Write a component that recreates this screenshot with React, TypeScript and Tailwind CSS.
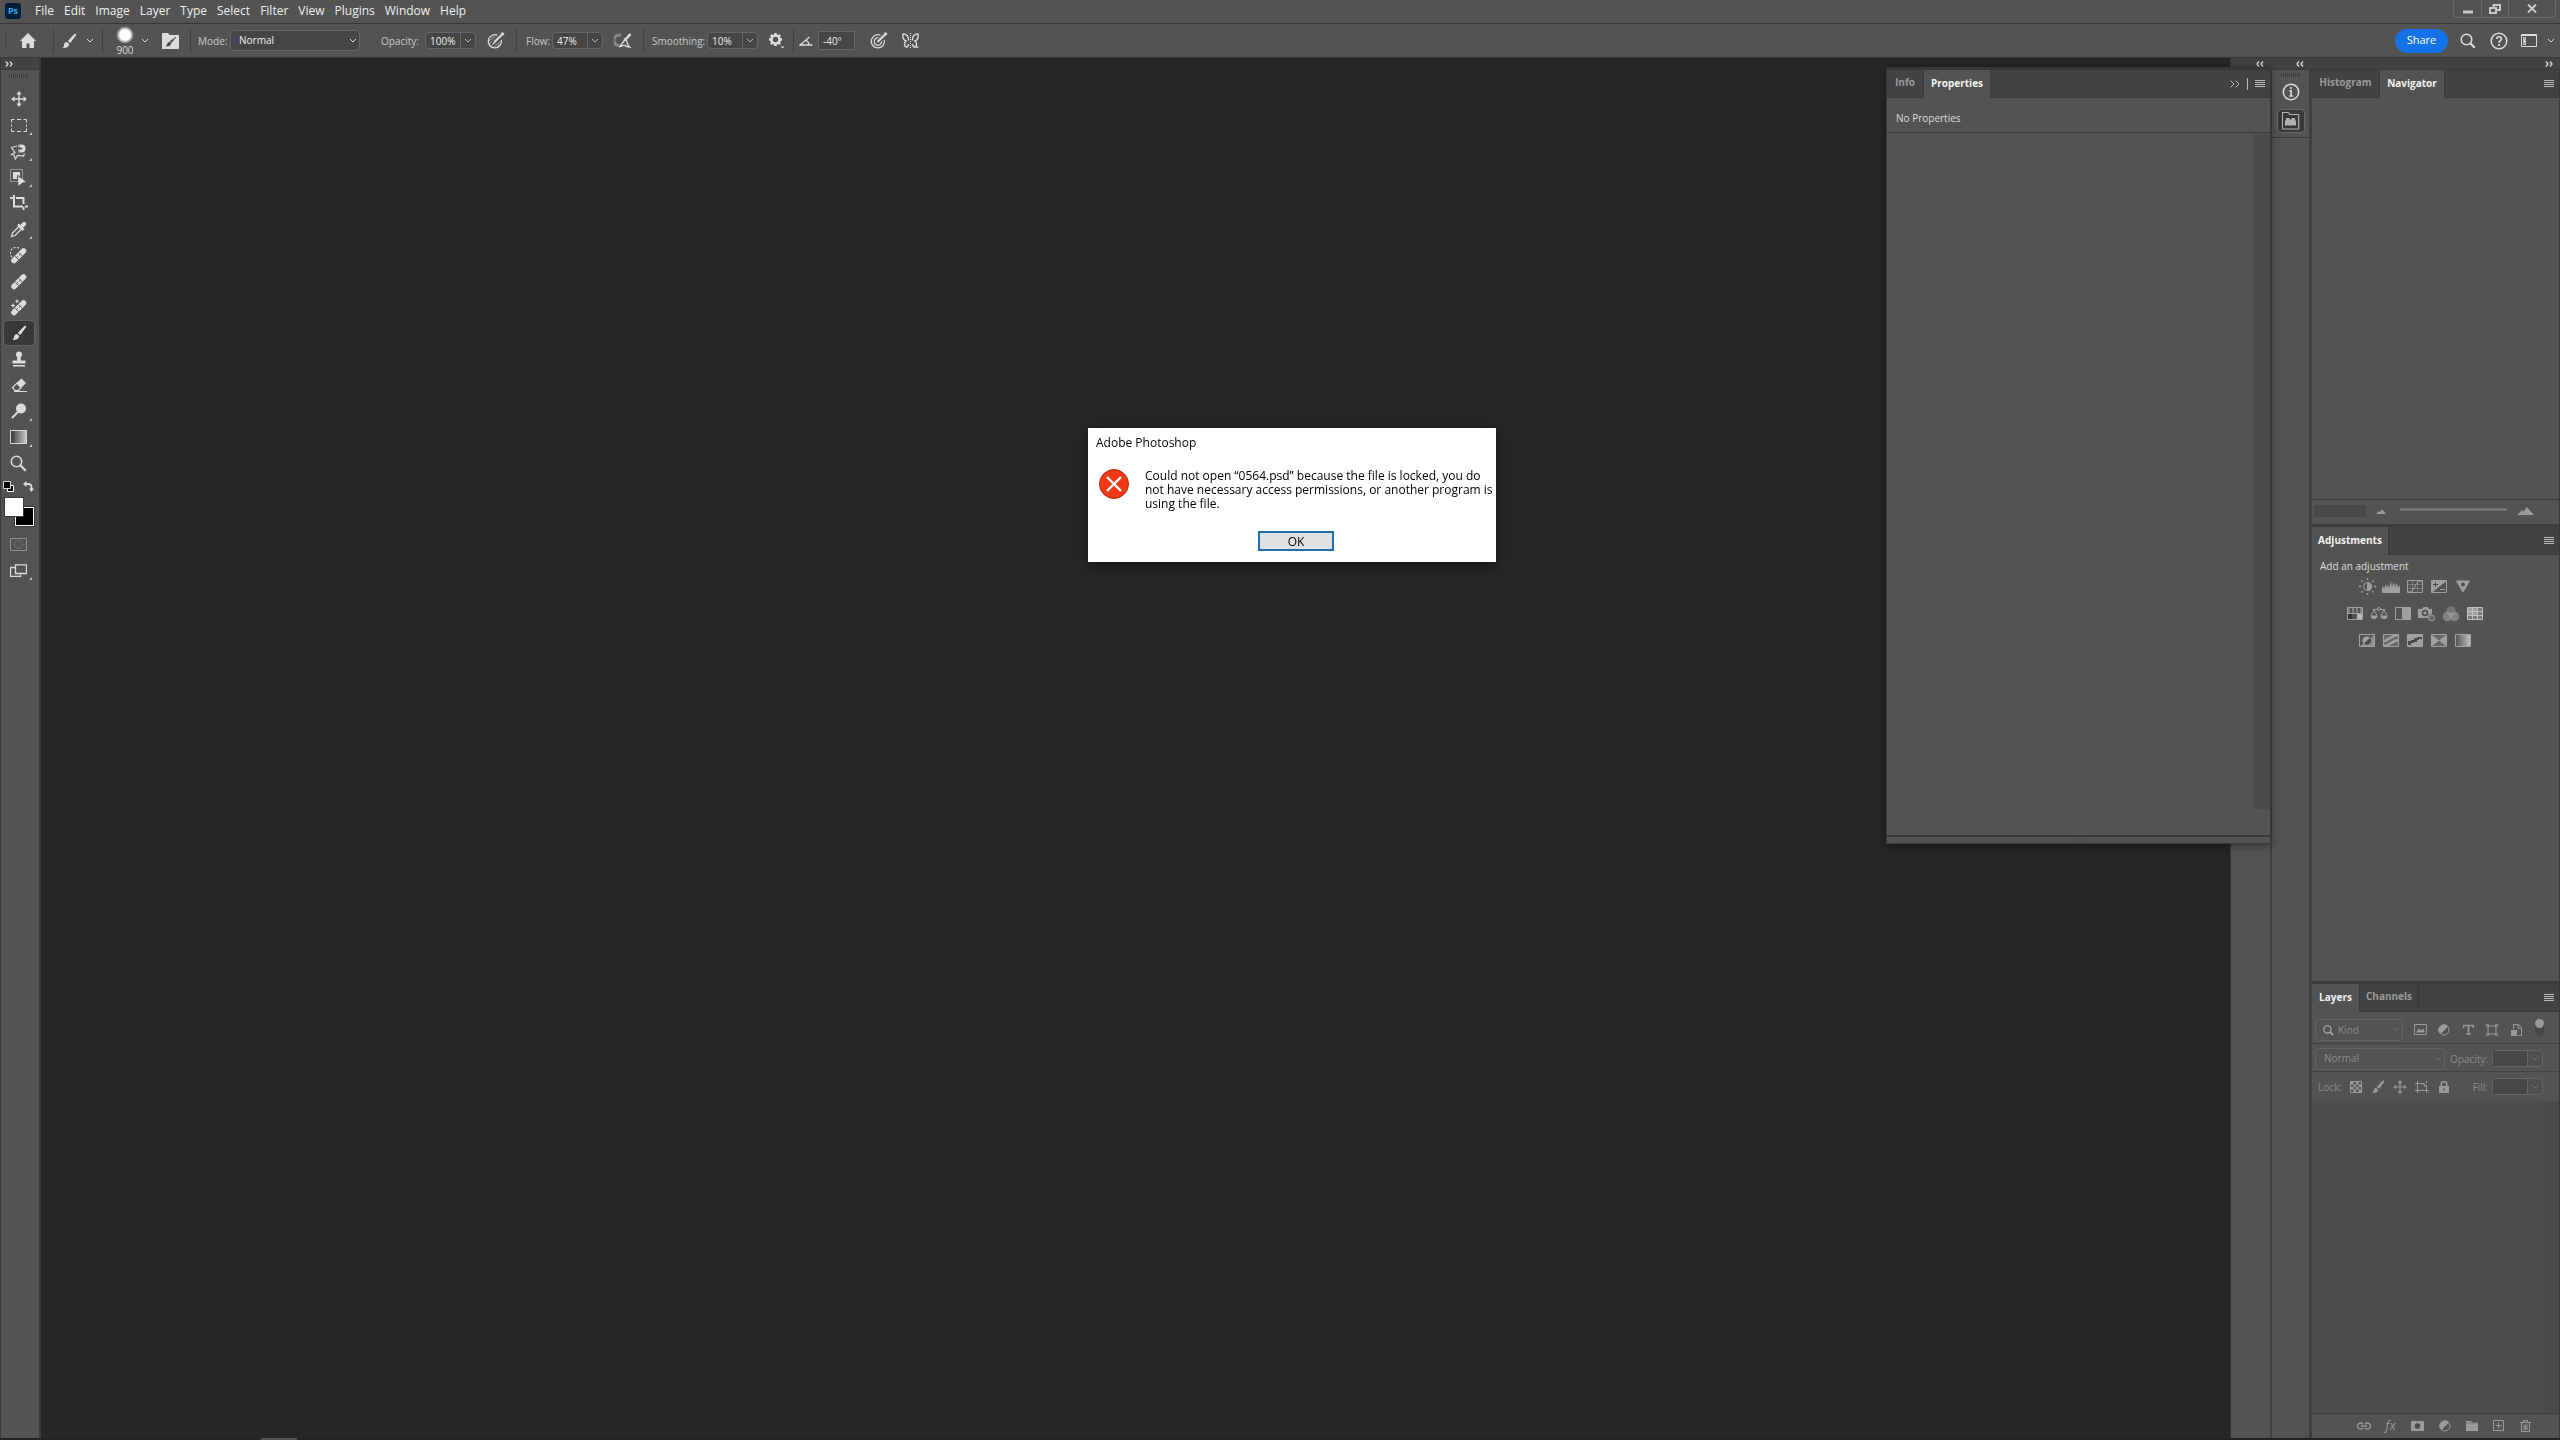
import React from "react";

type IconProps = { className?: string };

function Svg({ w, h, children, className = "" }: { w: number; h: number; children: React.ReactNode; className?: string }) {
  return (
    <svg width={w} height={h} viewBox={`0 0 ${w} ${h}`} fill="none" stroke="currentColor" className={`shrink-0 ${className}`} aria-hidden="true">
      {children}
    </svg>
  );
}

const Chevron = ({ className = "" }: IconProps) => (
  <Svg w={8} h={6} className={className}><path d="M1 1l3 3 3-3" /></Svg>
);

const MenuLines = () => (
  <Svg w={10} h={8}><path d="M0 .5h10M0 2.5h10M0 4.5h10M0 6.5h10" /></Svg>
);

const DoubleChevron = ({ left = false }: { left?: boolean }) => (
  <Svg w={8} h={6} className={left ? "rotate-180" : ""}><path d="M1 .5L3 3 1 5.500M5 .5L7 3 5 5.500" strokeWidth="1.300" /></Svg>
);

const Brush = ({ className = "" }: IconProps) => (
  <Svg w={16} h={16} className={className}>
    <g fill="currentColor" stroke="none">
      <path d="M14.800.8c.7.5.5 1.200.1 1.800L9.300 10 6.800 7.900l6.300-6.700c.6-.6 1.200-.7 1.700-.4z" />
      <path d="M5.800 8.900l2.500 2.200c-.2 2.500-2.800 4.100-7 4 1.800-1 1.500-2.300 1.900-4 .4-1.400 1.500-2.100 2.600-2.200z" />
    </g>
  </Svg>
);

const Home = () => (
  <Svg w={16} h={15}><path d="M8 0L0 8h2v7h4.500v-4.500h3V15H14V8h2z" fill="currentColor" stroke="none" /></Svg>
);

const BrushSettings = () => (
  <Svg w={18} h={18}>
    <path d="M0 1h6l1.500 2H17v14H0z" fill="currentColor" stroke="none" />
    <path d="M14 5l-4.500 5.500L8 9.300zM7.400 10l1.700 1.400c-.5 2-2 2.800-5 2.700 1.500-1 .8-3 3.300-4.100z" fill="#484848" stroke="#484848" strokeWidth=".6" />
  </Svg>
);

const PressureOpacity = () => (
  <Svg w={18} h={18}>
    <path d="M10.500 3.300A6.600 6.600 0 1 0 14.300 8" strokeWidth="1.300" />
    <path d="M2 9l6-5M2 12l6.500-6M3.500 14.500l4-3.500M6 16l7-6M9 16l5-4" opacity=".6" />
    <path d="M6 11.500L15.800 1.700" stroke="#535353" strokeWidth="5" />
    <path d="M7.500 10l7-7" strokeWidth="2.200" />
    <path d="M14.500 3l2-2" strokeWidth="3" />
    <path d="M5.500 12.200l3-.9-2-1.900z" fill="currentColor" stroke="none" />
  </Svg>
);

const Airbrush = () => (
  <Svg w={18} h={16}>
    <path d="M7 2.500A5.200 5.200 0 1 0 5.500 12.500" strokeWidth="3" opacity=".4" />
    <path d="M10 5.500l3 3M11 6.500L6 13.500c3 .3 3.500-2.500 5-1s2.500 1 4.500 1.500c-2-2-2.500-3-2.500-5.500" strokeWidth="1.300" />
    <path d="M11.500 6.500l5-5.500" strokeWidth="2.600" />
  </Svg>
);

const Gear = () => (
  <Svg w={17} h={17}>
    <circle cx="7.500" cy="7.500" r="4" strokeWidth="2.600" />
    <path d="M7.500 1v2M7.500 12v2M1 7.500h2M12 7.500h2M2.900 2.900l1.400 1.400M10.700 10.700l1.400 1.400M12.100 2.900l-1.400 1.400M4.300 10.700l-1.400 1.400" strokeWidth="2.600" />
    <path d="M12.500 14.500h4l-2 2z" fill="currentColor" stroke="none" />
  </Svg>
);

const Angle = () => (
  <Svg w={14} h={10}><path d="M10.500 1L1 9h12.500M7 4.500c2 .8 3 2.300 3 4.500" strokeWidth="1.300" /></Svg>
);

const PressureSize = () => (
  <Svg w={18} h={18}>
    <path d="M10.500 3.300A6.600 6.600 0 1 0 14.300 8" strokeWidth="1.300" />
    <path d="M9 6a3.700 3.700 0 1 0 2.600 3.300" strokeWidth="1.300" />
    <path d="M7 10.500l8-8" stroke="#535353" strokeWidth="4" />
    <path d="M7.500 10l7-7" strokeWidth="2.200" />
    <path d="M14.500 3l2-2" strokeWidth="3" />
  </Svg>
);

const Butterfly = () => (
  <Svg w={18} h={18}>
    <path d="M6.500 8.500C7 4.500 4 1.500 1 2c-.5 3 .5 6 3 7-2 1.500-2 5 0 6 1.500 0 2.500-1.500 2.500-3M10.500 8.500C10 4.500 13 1.500 16 2c.5 3-.5 6-3 7 2 1.500 2 5 0 6-1.500 0-2.500-1.500-2.500-3" strokeWidth="1.400" />
    <path d="M8.500 1v16" strokeDasharray="1 1" />
    <path d="M13 14.500h4l-2 2z" fill="currentColor" stroke="none" />
  </Svg>
);

const Search = () => (
  <Svg w={16} h={16}><circle cx="6.500" cy="6.500" r="5.300" strokeWidth="1.500" /><path d="M10.300 10.300l4.500 4.500" strokeWidth="2" /></Svg>
);

const Help = () => (
  <Svg w={18} h={18}>
    <circle cx="9" cy="9" r="7.800" strokeWidth="1.500" />
    <path d="M6.800 7c0-3 4.600-3 4.600 0 0 1.700-2.300 1.600-2.300 3.700M9.100 12v2" strokeWidth="1.700" />
  </Svg>
);

const Workspace = () => (
  <Svg w={16} h={13}><path d="M.5.5h15v12H.5zM.5 1.500h15" /><path d="M2.500 3.500h2v2h-2zM2.500 6.500h2v1h-2zM2.500 8.500h2v2h-2z" /></Svg>
);

const InfoIcon = () => (
  <Svg w={18} h={18}><circle cx="9" cy="9" r="7.700" strokeWidth="1.500" /><path d="M9 4v2M7.500 7.700h1.600V13M7.300 13h3.500" strokeWidth="1.600" /></Svg>
);

const Libraries = () => (
  <Svg w={18} h={18}>
    <path d="M.5 17V.5h6l1.200 2h9V17z" strokeWidth="1.100" />
    <path d="M3 13.500v-5h1V6h3.500v1.500h2V6H13v2.500h1v5z" fill="currentColor" stroke="none" />
  </Svg>
);

/* ---- Tool icons ---- */

const Move = () => (
  <Svg w={16} h={16}>
    <path d="M8 2v12M2 8h12" strokeWidth="1.400" />
    <path d="M8 0l2.700 3.500H5.300zM8 16l2.700-3.500H5.300zM0 8l3.500-2.700v5.400zM16 8l-3.500-2.700v5.400z" fill="currentColor" stroke="none" />
  </Svg>
);
const Marquee = () => (
  <Svg w={16} h={13}><path d="M.500 3.500v-3h3M6 .5h4M12.500.500h3v3M15.500 5.500v2M15.500 9.500v3h-3M10 12.500H6M3.500 12.500h-3v-3M.500 7.500v-2" /></Svg>
);
const Lasso = () => (
  <Svg w={17} h={17}>
    <path d="M7 3L1.500 4.500 5 9.500l-3.500 2L4 12l1.500 4 2-3.500 6 .5 1-2.500" strokeWidth="1.200" />
    <path d="M8 3h3.500a2.500 2.500 0 0 1 0 5H8" strokeWidth="3" />
    <path d="M9 1v4M9 6.500v3" stroke="#535353" strokeWidth=".8" />
  </Svg>
);
const ObjectSelect = () => (
  <Svg w={17} h={17}>
    <path d="M.5.5h12v12H.5z" strokeDasharray="1 1" />
    <path d="M3 3h7v4L7 6v4H3z" fill="currentColor" stroke="none" />
    <path d="M8 7l8 6-3.500.5L8.500 17z" fill="currentColor" stroke="none" />
  </Svg>
);
const Crop = () => (
  <Svg w={18} h={18}><path d="M0 4h3M4 1v11.500h9M6 4h7.500v6M13.500 13v3M15 12.500h3" strokeWidth="2" /></Svg>
);
const Eyedropper = () => (
  <Svg w={17} h={17}>
    <path d="M1.500 15.500l1-3.500L9 5.500 11.500 8 5 14.500z" strokeWidth="1.300" />
    <path d="M8 3.500L13.500 9M10.500 6.500L13.800 3" strokeWidth="2.500" />
    <path d="M12.500 4.500l1.700-1.700" strokeWidth="4" strokeLinecap="round" />
  </Svg>
);
const Bandage = () => (
  <>
    <path d="M4 13.500L13.500 4" strokeWidth="5.500" strokeLinecap="round" />
    <path d="M5.300 9.300l3.400 3.400M8.800 5.500l3.400 3.400" stroke="#535353" />
    <path d="M7.500 9.500h.1M9.500 8h.1" stroke="#535353" strokeLinecap="round" />
  </>
);
const SpotHeal = () => (
  <Svg w={17} h={17}><path d="M2 10A5.500 5.500 0 0 1 10 2" strokeDasharray="2 1.500" strokeWidth="1.200" /><Bandage /></Svg>
);
const Heal = () => <Svg w={17} h={17}><Bandage /></Svg>;
const Remove = () => (
  <Svg w={17} h={17}>
    <path d="M3 4l.8 1.700L5.500 6.500l-1.700.8L3 9l-.8-1.700L.5 6.500l1.700-.8zM7 0l.7 1.500L9.200 2.200l-1.500.7L7 4.400l-.7-1.500L4.800 2.200l1.500-.7z" fill="currentColor" stroke="none" />
    <Bandage />
  </Svg>
);
const Stamp = () => (
  <Svg w={14} h={16}>
    <g fill="currentColor" stroke="none">
      <circle cx="7" cy="3.500" r="3" />
      <path d="M5.500 5h3l.5 4.500h4.500v3H.5v-3H5zM1 14h12v1.500H1z" />
    </g>
  </Svg>
);
const Eraser = () => (
  <Svg w={16} h={14}>
    <path d="M6 5l4.500-4 4 4L10 9.500z" fill="currentColor" />
    <path d="M6 5l4 4.500-2.500 3H4L1.500 9.500zM3 13.500h13" strokeWidth="1.200" />
  </Svg>
);
const Dodge = () => (
  <Svg w={16} h={16}><circle cx="10" cy="5.500" r="5" fill="currentColor" stroke="none" /><path d="M7 9l-6 6" strokeWidth="2" /></Svg>
);
const GradientTool = () => (
  <Svg w={17} h={14}>
    <defs><linearGradient id="tool-gradient"><stop offset="0" stopColor="#333" /><stop offset="1" stopColor="#ccc" /></linearGradient></defs>
    <path d="M.5.5h16v13H.5z" fill="url(#tool-gradient)" />
  </Svg>
);
const ZoomTool = () => (
  <Svg w={17} h={17}><circle cx="6.500" cy="6.500" r="5.200" strokeWidth="1.500" /><path d="M10.200 10.200l5.500 5.500" strokeWidth="2.200" /></Svg>
);
const QuickMask = () => (
  <Svg w={17} h={13}><path d="M.5.5h16v12H.5z" /><circle cx="8.500" cy="6.500" r="4" strokeDasharray="1.200 1.200" /></Svg>
);
const ScreenMode = () => (
  <Svg w={17} h={13}><path d="M5.500 3.500h-5v9h10v-2" strokeWidth="1.300" /><path d="M5.500.8h11v8.700h-11z" strokeWidth="1.300" /></Svg>
);

/* ---- Small pieces ---- */

const Grip = ({ className = "" }: IconProps) => (
  <Svg w={20} h={4} className={`text-[#3d3d3d] ${className}`}><path d="M0 2h20" strokeWidth="4" strokeDasharray="1 1" /></Svg>
);

const Sep = () => <span className="h-6 w-px shrink-0 bg-[#404040]" />;

function NumberField({ id, label, value, disabled = false }: { id: string; label: string; value: string; disabled?: boolean }) {
  return (
    <>
      <label htmlFor={id} className={`flex-1 text-[10px] leading-4 ${disabled ? "text-right text-[#8c8c8c]" : "text-[#c8c8c8]"}`}>{label}</label>
      <span className={`flex h-[17px] w-[51px] shrink-0 rounded-sm border border-[#666] ${disabled ? "bg-[#4f4f4f]" : "bg-[#454545]"}`}>
        <input id={id} defaultValue={value} disabled={disabled} className={`w-[35px] border-r border-[#666] pl-1 text-[10px] leading-4 text-[#f0f0f0] outline-none ${disabled ? "bg-[#464646]" : "bg-transparent"}`} />
        <button aria-label={`${label} slider`} disabled={disabled} className="flex flex-1 items-center justify-center text-[#b8b8b8] disabled:text-[#707070]"><Chevron /></button>
      </span>
    </>
  );
}

function PanelMenu() {
  return <button aria-label="Panel menu" className="ml-auto mr-[5px] flex items-center text-[#b8b8b8]"><MenuLines /></button>;
}

function Tab({ name, active = false, className = "" }: { name: string; active?: boolean; className?: string }) {
  return (
    <button role="tab" aria-selected={active} className={`border-r border-[#383838] pb-0.5 text-[10px] font-bold ${active ? "bg-[#535353] text-[#f2f2f2]" : "border-b text-[#9a9a9a]"} ${className}`}>
      {name}
    </button>
  );
}

function TabBar({ children }: { children: React.ReactNode }) {
  return (
    <div role="tablist" className="flex h-7 shrink-0 bg-[#424242] shadow-[inset_0_-1px_0_#383838]">
      {children}
    </div>
  );
}

/* ---- Bars ---- */

const MENUS = ["File", "Edit", "Image", "Layer", "Type", "Select", "Filter", "View", "Plugins", "Window", "Help"];

function MenuBar() {
  return (
    <header className="flex h-6 shrink-0 border-b border-[#383838]">
      <div className="ml-[5px] mt-[3px] flex size-4 items-center justify-center rounded-[3px] bg-[#001e36] text-[9px] font-bold text-[#31a8ff]">Ps</div>
      <nav className="ml-[14px] flex h-[22px] gap-[10px] text-xs leading-5 text-[#f0f0f0]">
        {MENUS.map((m) => <button key={m}>{m}</button>)}
      </nav>
      <div className="ml-auto mr-1 flex h-[18px] rounded-b border border-t-0 border-[#6a6a6a] text-[#c8c8c8]">
        <button aria-label="Minimize" className="flex w-7 items-center justify-center border-r border-[#6a6a6a]">
          <Svg w={10} h={10}><path d="M0 8h10" strokeWidth="3" /></Svg>
        </button>
        <button aria-label="Restore" className="flex w-[27px] items-center justify-center border-r border-[#6a6a6a]">
          <Svg w={12} h={10}><path d="M1 4h6v5H1zM4.500 4V1H11v5H7.500" strokeWidth="2" /></Svg>
        </button>
        <button aria-label="Close" className="flex w-[46px] items-center justify-center">
          <Svg w={10} h={9}><path d="M1 .5l8 8M9 .5l-8 8" strokeWidth="2" /></Svg>
        </button>
      </div>
    </header>
  );
}

function OptionsBar() {
  return (
    <div className="flex h-[34px] shrink-0 items-center border-b border-[#383838] text-[#dcdcdc]">
      <Svg w={2} h={20} className="ml-[5px] text-[#404040]"><path d="M1 0v20" strokeWidth="2" strokeDasharray="1 1" /></Svg>
      <button aria-label="Home" className="flex w-[46px] justify-center pr-1"><Home /></button>
      <Sep />
      <button aria-label="Brush tool" className="flex w-12 items-center justify-between pl-[7px] pr-2"><Brush /><Chevron /></button>
      <Sep />
      <button aria-label="Brush preset picker" className="flex w-[59px] items-center justify-between pl-[13px] pr-[13px]">
        <span className="flex flex-col items-center">
          <span className="size-[18px] rounded-full bg-[radial-gradient(circle,#fff_40%,#535353_70%)]" />
          <span className="text-[10px] leading-3">900</span>
        </span>
        <Chevron />
      </button>
      <button aria-label="Brush settings" className="flex w-[28px] justify-start"><BrushSettings /></button>
      <Sep />
      <label htmlFor="mode" className="ml-[7px] w-8 text-[10px] leading-4 text-[#c8c8c8]">Mode:</label>
      <span className="relative">
        <select id="mode" className="block h-[21px] w-[130px] appearance-none rounded-sm border border-[#666] bg-[#454545] pl-2 text-[10px] text-[#f0f0f0] outline-none">
          <option>Normal</option>
        </select>
        <Chevron className="pointer-events-none absolute right-[3px] top-2" />
      </span>
      <div className="ml-[9px]"><Sep /></div>
      <div className="ml-3 flex w-[95px] items-center"><NumberField id="opacity" label="Opacity:" value="100%" /></div>
      <button aria-label="Pressure controls opacity" className="flex w-10 justify-center"><PressureOpacity /></button>
      <Sep />
      <div className="ml-[9px] flex w-[77px] items-center"><NumberField id="flow" label="Flow:" value="47%" /></div>
      <button aria-label="Airbrush" className="flex w-10 justify-center"><Airbrush /></button>
      <Sep />
      <div className="ml-2 flex w-[106px] items-center"><NumberField id="smoothing" label="Smoothing:" value="10%" /></div>
      <button aria-label="Smoothing options" className="flex w-[35px] justify-end pr-2"><Gear /></button>
      <Sep />
      <label htmlFor="angle" aria-label="Brush angle" className="flex w-6 justify-center"><Angle /></label>
      <input id="angle" defaultValue="-40º" className="h-[19px] w-[37px] border border-[#666] bg-[#454545] pl-1 text-[10px] text-[#f0f0f0] outline-none" />
      <div className="ml-1"><Sep /></div>
      <button aria-label="Pressure controls size" className="ml-[11px]"><PressureSize /></button>
      <button aria-label="Symmetry" className="ml-[14px]"><Butterfly /></button>

      <button className="ml-auto h-6 w-[53px] rounded-full bg-[#1473e6] text-[11px] text-white">Share</button>
      <button aria-label="Search" className="ml-3"><Search /></button>
      <button aria-label="Help" className="ml-[14px]"><Help /></button>
      <button aria-label="Workspace" className="ml-[13px] mr-[5px] flex items-center gap-[10px]"><Workspace /><Chevron /></button>
    </div>
  );
}

const TOOLS: { name: string; icon: React.ReactNode; more?: boolean; active?: boolean }[] = [
  { name: "Move", icon: <Move /> },
  { name: "Rectangular marquee", icon: <Marquee />, more: true },
  { name: "Magnetic lasso", icon: <Lasso />, more: true },
  { name: "Object selection", icon: <ObjectSelect />, more: true },
  { name: "Crop", icon: <Crop /> },
  { name: "Eyedropper", icon: <Eyedropper />, more: true },
  { name: "Spot healing brush", icon: <SpotHeal /> },
  { name: "Healing brush", icon: <Heal /> },
  { name: "Remove", icon: <Remove /> },
  { name: "Brush", icon: <Brush />, active: true },
  { name: "Clone stamp", icon: <Stamp /> },
  { name: "Eraser", icon: <Eraser /> },
  { name: "Dodge", icon: <Dodge />, more: true },
  { name: "Gradient", icon: <GradientTool />, more: true },
  { name: "Zoom", icon: <ZoomTool /> },
];

function ToolButton({ name, icon, more, active }: { name: string; icon: React.ReactNode; more?: boolean; active?: boolean }) {
  return (
    <button aria-label={name} className={`relative flex h-[26px] w-8 items-center justify-center rounded pr-px ${active ? "border border-[#636363] bg-[#383838]" : ""}`}>
      {icon}
      {more && <span className="absolute bottom-[3px] right-[3px] border-b-[3px] border-l-[3px] border-b-[#c0c0c0] border-l-transparent" />}
    </button>
  );
}

function Toolbar() {
  return (
    <aside className="flex w-[41px] shrink-0 flex-col border-l border-r-2 border-[#3a3a3a] text-[#dcdcdc]">
      <div className="flex h-3 shrink-0 items-center border-b border-[#383838] bg-[#424242] pl-1"><DoubleChevron /></div>
      <div className="flex flex-col items-center pr-[2px] pt-1">
        <Grip className="mb-2" />
        {TOOLS.map((t) => <ToolButton key={t.name} {...t} />)}
        <div className="relative h-[55px] w-8">
          <button aria-label="Default colors" className="absolute left-0 top-[5px]">
            <Svg w={11} h={11}><path d="M4.500 4.500h6v6h-6z" fill="#000" stroke="#fff" /><path d="M.5.5h7v7h-7z" fill="#000" /></Svg>
          </button>
          <button aria-label="Swap colors" className="absolute right-[1px] top-[5px]">
            <Svg w={11} h={11}><path d="M3 3h2c2.500 0 3.500 1 3.500 3.500V8" strokeWidth="1.800" /><path d="M0 3l3.500-3v6zM8.500 11l2.500-3.500H6z" fill="currentColor" stroke="none" /></Svg>
          </button>
          <button aria-label="Background color" className="absolute left-3 top-[31px] size-[19px] border border-white bg-black outline outline-1 outline-[#383838]" />
          <button aria-label="Foreground color" className="absolute left-px top-[21px] size-5 border border-[#383838] bg-white" />
        </div>
        <ToolButton name="Quick mask" icon={<span className="text-[#909090]"><QuickMask /></span>} />
        <ToolButton name="Screen mode" icon={<ScreenMode />} more />
      </div>
    </aside>
  );
}

/* ---- Floating properties panel ---- */

function PropertiesPanel() {
  return (
    <section className="absolute right-[41px] top-[9px] flex h-[777px] w-[385px] flex-col border-x border-b border-t-[3px] border-[#383838] bg-[#535353] shadow-[0_2px_8px_rgba(0,0,0,0.4)]">
      <TabBar>
        <Tab name="Info" className="w-[37px]" />
        <Tab name="Properties" active className="w-[67px]" />
        <div className="ml-auto mr-[5px] flex items-center gap-[7px] text-[#b8b8b8]">
          <button aria-label="Collapse panel"><Svg w={10} h={8}><path d="M.5.5L4 4 .5 7.500M5.500.5L9 4 5.500 7.500" /></Svg></button>
          <span className="h-3 w-px bg-[#b8b8b8]" />
          <button aria-label="Panel menu"><MenuLines /></button>
        </div>
      </TabBar>
      <p className="h-[35px] shrink-0 border-b border-[#383838] pl-[9px] pt-3 text-[10px] leading-4 text-[#dcdcdc]">No Properties</p>
      <div className="flex flex-1 justify-end pb-[26px] pt-px"><div className="w-4 bg-[#4a4a4a]" /></div>
      <div className="flex h-2 shrink-0 items-center justify-center border-t-2 border-[#383838]"><Grip className="opacity-40" /></div>
    </section>
  );
}

/* ---- Right docks ---- */

const AdjBox = ({ children }: { children?: React.ReactNode }) => <Svg w={16} h={13}>{children}<path d="M.5.5h15v12H.5z" /></Svg>;

const ADJUSTMENTS: { name: string; icon: React.ReactNode }[][] = [
  [
    { name: "Brightness/Contrast", icon: <Svg w={17} h={17}><circle cx="8.500" cy="8.500" r="4" /><path d="M8.500 4.500a4 4 0 0 1 0 8z" fill="currentColor" /><path d="M8.500 0v2M8.500 15v2M0 8.500h2M15 8.500h2M2.500 2.500l1.400 1.400M13.100 13.100l1.400 1.400M2.500 14.500l1.400-1.400M13.100 3.900l1.400-1.400" strokeWidth="1.300" /></Svg> },
    { name: "Levels", icon: <Svg w={18} h={12}><path d="M0 12V7l1-2 1 3 2-5 1 4 1-4 1 4 2-7 1 6 2-5 1 5 2-4 1 5 2-3v8z" fill="currentColor" stroke="none" /></Svg> },
    { name: "Curves", icon: <AdjBox><path d="M5.500 0v13M10.500 0v13M0 4.500h16M0 8.500h16" opacity=".5" /><path d="M1 12c9 0 5-11 14-11" /></AdjBox> },
    { name: "Exposure", icon: <AdjBox><path d="M1 12.500L15.500 1H1z" fill="currentColor" stroke="none" /><path d="M4.500 2v5M2 4.500h5" stroke="#484848" /><path d="M9 9.500h5" /></AdjBox> },
    { name: "Vibrance", icon: <Svg w={16} h={13}><path d="M1.500 1h13L8 12z" fill="currentColor" /><circle cx="8" cy="4.500" r="2" fill="#4a4a4a" stroke="none" /></Svg> },
  ],
  [
    { name: "Hue/Saturation", icon: <AdjBox><path d="M1 3.500h14" strokeWidth="5" strokeDasharray="2 2" opacity=".6" /><path d="M0 6.500h16" /><path d="M1 7h4v5H1z" fill="#333" stroke="none" /><path d="M10 7h5v5h-5z" fill="#bbb" stroke="none" /></AdjBox> },
    { name: "Color balance", icon: <Svg w={18} h={13}><path d="M3 2.500h12M4 3L1 8.500M4 3l3 5.500M14 3l-3 5.500M14 3l3 5.500" /><circle cx="9" cy="2" r="1.500" fill="#535353" /><path d="M.5 8.500h7a3.500 3.500 0 0 1-7 0zM10.500 8.500h7a3.500 3.500 0 0 1-7 0z" fill="currentColor" stroke="none" /></Svg> },
    { name: "Black & White", icon: <AdjBox><path d="M7 0h9v13H7z" fill="currentColor" stroke="none" /></AdjBox> },
    { name: "Photo filter", icon: <Svg w={18} h={16}><path d="M0 3h4l1.500-2h4L11 3h3v9H0z" fill="currentColor" stroke="none" /><circle cx="7" cy="7" r="2.500" stroke="#4a4a4a" strokeWidth="1.500" /><circle cx="13.500" cy="12" r="3.500" fill="#535353" stroke="#535353" /><circle cx="13.500" cy="12" r="3" fill="#686868" /></Svg> },
    { name: "Channel mixer", icon: <Svg w={18} h={16}><g fill="currentColor" stroke="none"><circle cx="9" cy="5" r="4.800" opacity=".45" /><circle cx="5.500" cy="10.500" r="4.800" opacity=".6" /><circle cx="12.500" cy="10.500" r="4.800" opacity=".6" /></g></Svg> },
    { name: "Color lookup", icon: <Svg w={16} h={13} className="text-[#c0c0c0]"><path d="M.5.5h15v12H.5z" fill="#7a7a7a" /><path d="M1 1h9v7H1z" fill="#a0a0a0" stroke="none" /><path d="M5.500 0v13M10.500 0v13M0 4.500h16M0 8.500h16" /></Svg> },
  ],
  [
    { name: "Invert", icon: <AdjBox><path d="M1 12.500L15.500 1V12.500z" fill="currentColor" stroke="none" opacity=".8" /><path d="M4.700 9.700A3.800 3.800 0 0 1 11 3.800z" fill="currentColor" stroke="none" /><path d="M5.300 9.300a3.800 3.800 0 0 0 5.800-5z" fill="#484848" stroke="none" /></AdjBox> },
    { name: "Posterize", icon: <AdjBox><path d="M1 1h14v11H1z" fill="#686868" stroke="none" /><path d="M0 7C6 7 8 1 15 1M1 12c6 0 8-6 15-6" strokeWidth="2.500" /></AdjBox> },
    { name: "Threshold", icon: <AdjBox><path d="M1 1h14v11H1z" fill="currentColor" stroke="none" /><path d="M1 9V7h3V6h3V4h3V3h5v2h-3v1h-2v2H7v1H4v2H1z" fill="#484848" stroke="none" /></AdjBox> },
    { name: "Selective color", icon: <AdjBox><path d="M1 1h14v11H1z" fill="#666" stroke="none" /><path d="M1 1l7 5.500L1 12zM15 1L8 6.500 15 12z" fill="currentColor" stroke="none" /></AdjBox> },
    { name: "Gradient map", icon: <AdjBox><defs><linearGradient id="map-gradient"><stop offset="0" stopColor="#555" /><stop offset="1" stopColor="#c0c0c0" /></linearGradient></defs><path d="M1 1h14v11H1z" fill="url(#map-gradient)" stroke="none" /></AdjBox> },
  ],
];

const HalfCircle = () => (
  <Svg w={12} h={12}><circle cx="6" cy="6" r="5" /><path d="M9.700 2.300A5.200 5.200 0 0 0 2.300 9.700z" fill="currentColor" /></Svg>
);

const FILTERS = [
  { name: "Pixel layers", icon: <Svg w={13} h={11}><path d="M.5.5h12v10H.5z" /><path d="M2 8.500l3-4 2 2 2-2 2 4z" fill="currentColor" stroke="none" /></Svg> },
  { name: "Adjustment layers", icon: <HalfCircle /> },
  { name: "Type layers", icon: <Svg w={11} h={11}><path d="M.5 4V1.500h10V4M5.500 1.500v9M3 10h5" strokeWidth="1.700" /></Svg> },
  { name: "Shape layers", icon: <Svg w={12} h={12}><path d="M2 2h8v8H2z" /><path d="M.5.5h2v2h-2zM9.500.5h2v2h-2zM.5 9.500h2v2h-2zM9.500 9.500h2v2h-2z" fill="#535353" /></Svg> },
  { name: "Smart objects", icon: <Svg w={11} h={12}><path d="M2.500 5V.5h5l3 3v8H7M7 .5v3.500h3" /><path d="M0 6h6v6H0z" fill="currentColor" stroke="none" /></Svg> },
];

const LOCKS = [
  { name: "Lock transparent pixels", icon: <Svg w={12} h={12}><path d="M.5.5h11v11H.5z" /><path d="M1 1h2.500v2.500H1zM6 1h2.500v2.500H6zM3.500 3.500H6V6H3.500zM8.500 3.500H11V6H8.500zM1 6h2.500v2.500H1zM6 6h2.500v2.500H6zM3.500 8.500H6V11H3.500zM8.500 8.500H11V11H8.500z" fill="currentColor" stroke="none" /></Svg> },
  { name: "Lock image pixels", icon: <Brush className="size-[14px]" /> },
  { name: "Lock position", icon: <span className="[&>svg]:size-[14px]"><Move /></span> },
  { name: "Lock artboard nesting", icon: <Svg w={14} h={12}><path d="M2.500 0v12M0 2.500h9l2.500 2.500v7M0 9.500h14M9 2.500V5h3M11.500 0v2" /></Svg> },
  { name: "Lock all", icon: <Svg w={10} h={12}><path d="M0 5h10v7H0z" fill="currentColor" stroke="none" /><path d="M2.200 5V3a2.800 2.300 0 0 1 5.600 0v2" strokeWidth="1.500" /><path d="M5 7.500v2" stroke="#484848" strokeWidth="1.500" /></Svg> },
];

const LAYER_ACTIONS = [
  { name: "Link layers", icon: <Svg w={14} h={8}><path d="M6 2.200A3 3 0 1 0 6 5.800M8 2.200A3 3 0 1 1 8 5.800M4 4h6" strokeWidth="1.300" /></Svg> },
  { name: "Layer style", icon: <span className="text-[13px] font-medium italic leading-none">fx</span> },
  { name: "Add mask", icon: <Svg w={13} h={10}><path d="M0 0h13v10H0z" fill="currentColor" stroke="none" /><circle cx="6.500" cy="5" r="2.800" fill="#4a4a4a" stroke="none" /></Svg> },
  { name: "New adjustment layer", icon: <HalfCircle /> },
  { name: "New group", icon: <Svg w={12} h={10}><path d="M0 0h5l1 1.500h6V10H0z" fill="currentColor" stroke="none" /><path d="M0 2h12" stroke="#666" strokeWidth=".6" /></Svg> },
  { name: "New layer", icon: <Svg w={11} h={11}><path d="M.5.5h10v10H.5zM5.500 2.500v6M2.500 5.500h6" /></Svg> },
  { name: "Delete layer", icon: <Svg w={11} h={12}><path d="M0 2.500h11M3.500 2.500v-2h4v2M1.500 3v8.500h8V3M4 4.500v5.500M5.500 4.500v5.500M7 4.500v5.500" /></Svg> },
];

function IconDock() {
  return (
    <aside className="flex w-[37px] shrink-0 flex-col items-center bg-[#535353] pt-[3px] text-[#dcdcdc]">
      <Grip className="mb-[6px]" />
      <button aria-label="Info"><InfoIcon /></button>
      <button aria-label="Libraries" className="mt-2 flex h-6 w-7 items-center justify-center rounded border border-[#666] bg-[#383838] text-[#b0b0b0]"><Libraries /></button>
      <span className="mt-1 h-px w-full bg-[#383838]" />
    </aside>
  );
}

function PanelDock() {
  return (
    <aside className="flex w-[248px] shrink-0 flex-col border-r border-[#383838] bg-[#535353]">
      <section className="flex h-[454px] shrink-0 flex-col">
        <TabBar>
          <Tab name="Histogram" className="w-[68px]" />
          <Tab name="Navigator" active className="w-[65px]" />
          <PanelMenu />
        </TabBar>
        <div className="flex-1" />
        <div className="flex h-[25px] items-center border-t border-[#383838] pb-[2px] pl-[2px] text-[#9a9a9a]">
          <input aria-label="Zoom level" disabled className="h-3 w-[52px] bg-[#474747]" />
          <Svg w={10} h={5} className="ml-[10px]"><path d="M0 5l3-3 1 1 2-3 4 5z" fill="currentColor" stroke="none" /></Svg>
          <input aria-label="Zoom" type="range" disabled className="mb-1 ml-[14px] h-[3px] w-[107px] appearance-none bg-[#757575] [&::-webkit-slider-thumb]:appearance-none" />
          <Svg w={17} h={8} className="ml-[10px]"><path d="M0 8l5-5 1.500 1.500L10 0l7 8z" fill="currentColor" stroke="none" /></Svg>
        </div>
      </section>

      <section className="flex h-[457px] shrink-0 flex-col border-t-[3px] border-[#3c3c3c]">
        <TabBar>
          <Tab name="Adjustments" active className="w-[77px]" />
          <PanelMenu />
        </TabBar>
        <h2 className="mt-1 pl-2 text-[10px] font-medium leading-[14px] text-[#dcdcdc]">Add an adjustment</h2>
        <div className="flex w-[206px] flex-col text-[#a0a0a0]">
          {ADJUSTMENTS.map((row, i) => (
            <div key={i} className="flex h-[27px] items-center justify-center">
              {row.map((a) => <button key={a.name} aria-label={a.name} className="flex w-6 justify-center">{a.icon}</button>)}
            </div>
          ))}
        </div>
      </section>

      <section className="flex min-h-0 flex-1 flex-col border-t-[3px] border-[#3c3c3c] text-[#9a9a9a]">
        <TabBar>
          <Tab name="Layers" active className="w-12" />
          <Tab name="Channels" className="w-[59px]" />
          <PanelMenu />
        </TabBar>
        <div className="flex h-8 shrink-0 items-center border-b border-[#424242] pl-[3px] pt-[5px]">
          <span className="relative">
            <select aria-label="Filter type" disabled className="block h-[22px] w-[88px] appearance-none rounded-sm border border-[#636363] pl-[22px] text-[10px] text-[#8c8c8c] opacity-100">
              <option>Kind</option>
            </select>
            <span className="pointer-events-none absolute left-2 top-[6px] text-[#b8b8b8] [&>svg]:size-[11px]"><Search /></span>
            <Chevron className="pointer-events-none absolute right-[3px] top-2 text-[#707070]" />
          </span>
          <div className="ml-[5px] flex">
            {FILTERS.map((f) => <button key={f.name} aria-label={f.name} className="flex w-6 justify-center">{f.icon}</button>)}
          </div>
          <button role="switch" aria-checked="true" aria-label="Layer filtering" className="mb-1 ml-[7px] flex h-[18px] w-[9px] items-start rounded-full bg-[#484848]"><span className="size-[9px] rounded-full bg-[#9a9a9a]" /></button>
        </div>
        <div className="flex h-7 shrink-0 items-center border-b border-[#424242] pl-[3px] pr-4 pt-[2px]">
          <span className="relative">
            <select aria-label="Blend mode" disabled className="block h-[22px] w-[130px] appearance-none rounded-sm border border-[#636363] pl-2 text-[10px] text-[#8c8c8c] opacity-100">
              <option>Normal</option>
            </select>
            <Chevron className="pointer-events-none absolute right-[3px] top-2 text-[#707070]" />
          </span>
          <div className="flex flex-1 items-center gap-1"><NumberField id="layer-opacity" label="Opacity:" value="" disabled /></div>
        </div>
        <div className="flex h-[29px] shrink-0 items-center pl-[6px] pr-4">
          <span className="w-[27px] text-[10px] leading-4 text-[#8c8c8c]">Lock:</span>
          {LOCKS.map((l) => <button key={l.name} aria-label={l.name} className="flex w-[22px] justify-center">{l.icon}</button>)}
          <div className="flex flex-1 items-center gap-1"><NumberField id="layer-fill" label="Fill:" value="" disabled /></div>
        </div>
        <div className="flex flex-1 justify-end bg-[#4d4d4d]"><div className="w-4 bg-[#4a4a4a]" /></div>
        <div className="flex h-[25px] shrink-0 items-center border-t border-[#3c3c3c] pb-px pl-[38px]">
          {LAYER_ACTIONS.map((a) => <button key={a.name} aria-label={a.name} className="flex w-[27px] justify-center">{a.icon}</button>)}
        </div>
      </section>
    </aside>
  );
}

function Docks() {
  return (
    <div className="relative flex shrink-0 flex-col border-l border-[#383838] text-[#dcdcdc]">
      <div className="flex h-3 shrink-0 items-center border-b border-[#383838] bg-[#424242]">
        <span className="flex w-10 justify-end pr-[7px]"><DoubleChevron left /></span>
        <span className="flex w-[37px] justify-end pr-1"><DoubleChevron left /></span>
        <span className="ml-auto mr-[7px]"><DoubleChevron /></span>
      </div>
      <div className="flex min-h-0 flex-1">
        <div className="w-[39px] bg-[#535353]" />
        <div className="w-[2px] bg-[#3e3e3e]" />
        <IconDock />
        <div className="w-[3px] bg-[#3e3e3e]" />
        <PanelDock />
      </div>
    </div>
  );
}

function ErrorDialog() {
  return (
    <div className="fixed inset-0 flex items-start justify-center pl-6 pt-[428px]">
      <div role="alertdialog" aria-labelledby="dialog-title" aria-describedby="dialog-text" className="flex w-[408px] flex-col bg-white pb-[11px] text-black shadow-[0_4px_14px_rgba(0,0,0,0.45)]">
        <h1 id="dialog-title" className="pl-2 pt-[6px] text-xs leading-[18px]">Adobe Photoshop</h1>
        <div className="mt-[17px] flex gap-4 pl-[11px]">
          <Svg w={30} h={30}>
            <circle cx="15" cy="15" r="14.500" fill="#f03a17" stroke="#b02a12" />
            <path d="M8 8l14 14M22 8L8 22" stroke="#fff" strokeWidth="2.400" />
          </Svg>
          <p id="dialog-text" className="whitespace-nowrap text-xs leading-[14px]">
            Could not open “0564.psd” because the file is locked, you do<br />
            not have necessary access permissions, or another program is<br />
            using the file.
          </p>
        </div>
        <button className="ml-[170px] mt-5 h-5 w-[76px] border-2 border-[#1f6fae] bg-[#e1e1e1] pt-px text-xs leading-4">OK</button>
      </div>
    </div>
  );
}

export default function App() {
  return (
    <div className="flex h-screen flex-col bg-[#535353] font-['Open_Sans',sans-serif]">
      <MenuBar />
      <OptionsBar />
      <div className="relative flex min-h-0 flex-1">
        <Toolbar />
        <main className="flex-1 bg-[#262626]" />
        <Docks />
        <div className="absolute inset-y-0 right-[248px] w-0"><PropertiesPanel /></div>
      </div>
      <div className="flex h-[2px] shrink-0 bg-[#262223] pl-[261px]"><span className="w-9 bg-[#535353]" /></div>
      <ErrorDialog />
    </div>
  );
}
